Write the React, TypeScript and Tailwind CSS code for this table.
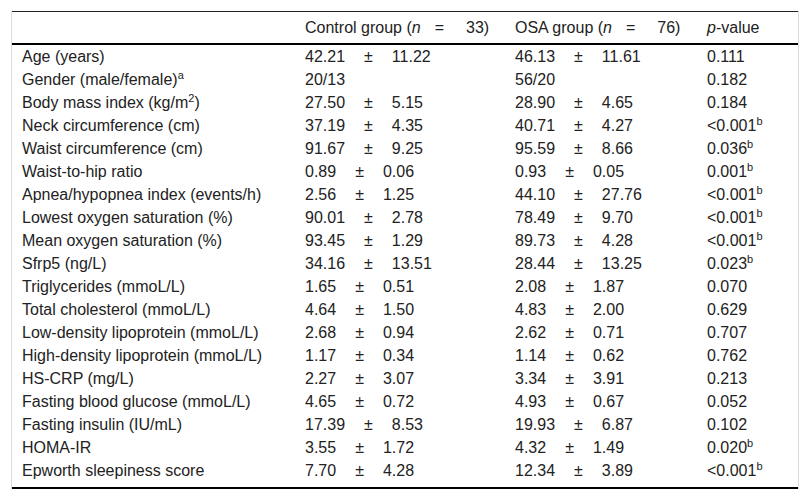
import React from 'react';

type Row = {
  label: React.ReactNode;
  control: [string, string?];
  osa: [string, string?];
  p: string;
  sig?: boolean;
};

const rows: Row[] = [
  { label: 'Age (years)', control: ['42.21', '11.22'], osa: ['46.13', '11.61'], p: '0.111' },
  { label: <>Gender (male/female)<sup className="text-[11px]">a</sup></>, control: ['20/13'], osa: ['56/20'], p: '0.182' },
  { label: <>Body mass index (kg/m<sup className="text-[11px]">2</sup>)</>, control: ['27.50', '5.15'], osa: ['28.90', '4.65'], p: '0.184' },
  { label: 'Neck circumference (cm)', control: ['37.19', '4.35'], osa: ['40.71', '4.27'], p: '<0.001', sig: true },
  { label: 'Waist circumference (cm)', control: ['91.67', '9.25'], osa: ['95.59', '8.66'], p: '0.036', sig: true },
  { label: 'Waist-to-hip ratio', control: ['0.89', '0.06'], osa: ['0.93', '0.05'], p: '0.001', sig: true },
  { label: 'Apnea/hypopnea index (events/h)', control: ['2.56', '1.25'], osa: ['44.10', '27.76'], p: '<0.001', sig: true },
  { label: 'Lowest oxygen saturation (%)', control: ['90.01', '2.78'], osa: ['78.49', '9.70'], p: '<0.001', sig: true },
  { label: 'Mean oxygen saturation (%)', control: ['93.45', '1.29'], osa: ['89.73', '4.28'], p: '<0.001', sig: true },
  { label: 'Sfrp5 (ng/L)', control: ['34.16', '13.51'], osa: ['28.44', '13.25'], p: '0.023', sig: true },
  { label: 'Triglycerides (mmoL/L)', control: ['1.65', '0.51'], osa: ['2.08', '1.87'], p: '0.070' },
  { label: 'Total cholesterol (mmoL/L)', control: ['4.64', '1.50'], osa: ['4.83', '2.00'], p: '0.629' },
  { label: 'Low-density lipoprotein (mmoL/L)', control: ['2.68', '0.94'], osa: ['2.62', '0.71'], p: '0.707' },
  { label: 'High-density lipoprotein (mmoL/L)', control: ['1.17', '0.34'], osa: ['1.14', '0.62'], p: '0.762' },
  { label: 'HS-CRP (mg/L)', control: ['2.27', '3.07'], osa: ['3.34', '3.91'], p: '0.213' },
  { label: 'Fasting blood glucose (mmoL/L)', control: ['4.65', '0.72'], osa: ['4.93', '0.67'], p: '0.052' },
  { label: 'Fasting insulin (IU/mL)', control: ['17.39', '8.53'], osa: ['19.93', '6.87'], p: '0.102' },
  { label: 'HOMA-IR', control: ['3.55', '1.72'], osa: ['4.32', '1.49'], p: '0.020', sig: true },
  { label: 'Epworth sleepiness score', control: ['7.70', '4.28'], osa: ['12.34', '3.89'], p: '<0.001', sig: true },
];

function MeanSd({ value }: { value: [string, string?] }) {
  const [mean, sd] = value;
  if (!sd) return <>{mean}</>;
  return (
    <>
      {mean}
      <span className="mx-[19px]">±</span>
      {sd}
    </>
  );
}

function GroupHeader({ name, n }: { name: string; n: number }) {
  return (
    <>
      {name} (<i>n</i>
      <span className="ml-[14px]">=</span>
      <span className="ml-[22px]">{n})</span>
    </>
  );
}

export default function App() {
  return (
    <div className="w-[810px] h-[499px] bg-white pt-[11px] px-[11px] font-['Liberation_Sans',Arial,sans-serif] text-[16px] leading-[18px] text-[#222]">
      <div className="border-x border-[#dcdcdc]">
        <table className="w-full table-fixed border-separate border-spacing-0">
          <colgroup>
            <col className="w-[283px]" />
            <col className="w-[210px]" />
            <col className="w-[192px]" />
            <col />
          </colgroup>
          <thead>
            <tr>
              {[
                null,
                <GroupHeader name="Control group" n={33} />,
                <GroupHeader name="OSA group" n={76} />,
                <>
                  <i>p</i>-value
                </>,
              ].map((c, i) => (
                <th
                  key={i}
                  className="h-[34px] p-0 pl-[10px] font-normal text-left whitespace-nowrap border-t border-t-[#222] border-b-2 border-b-black"
                >
                  {c}
                </th>
              ))}
            </tr>
          </thead>
          <tbody>
            {rows.map((r, i) => {
              const last = i === rows.length - 1;
              const cell = last
                ? 'h-[30px] p-0 pl-[10px] pb-[5px] whitespace-nowrap border-b-2 border-b-black'
                : 'h-[23px] p-0 pl-[10px] whitespace-nowrap';
              return (
                <tr key={i}>
                  <td className={cell}>{r.label}</td>
                  <td className={cell}>
                    <MeanSd value={r.control} />
                  </td>
                  <td className={cell}>
                    <MeanSd value={r.osa} />
                  </td>
                  <td className={cell}>
                    {r.p}
                    {r.sig && <sup className="text-[11px]">b</sup>}
                  </td>
                </tr>
              );
            })}
          </tbody>
        </table>
      </div>
    </div>
  );
}
